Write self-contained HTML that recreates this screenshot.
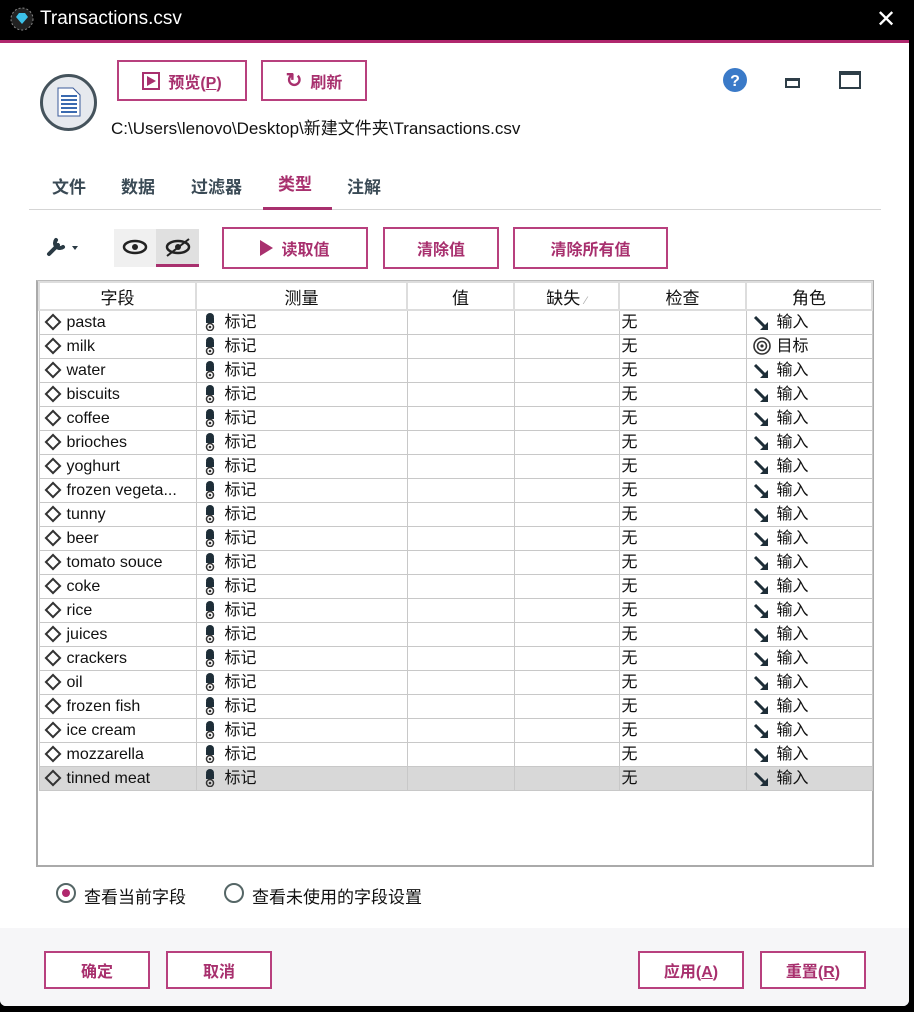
<!DOCTYPE html>
<html><head><meta charset="utf-8"><style>
*{box-sizing:border-box;margin:0;padding:0}
body{width:914px;height:1012px;background:#000;font-family:"Liberation Sans","Noto Sans CJK SC",sans-serif;position:relative;overflow:hidden}
.win{position:absolute;left:0;top:40px;width:909px;height:966px;background:#fff;border-top:3px solid #b0286e;border-radius:0 0 6px 6px;overflow:hidden}
.abs{position:absolute}
.btn{position:absolute;border:2px solid #b8407e;background:#fff;color:#a8306e;font-weight:bold;font-size:16px;display:flex;align-items:center;justify-content:center;gap:8px}
.u{text-decoration:underline}
.tab{position:absolute;top:173px;font-size:17px;color:#3a4a55;font-weight:bold}
table{border-collapse:collapse;position:absolute;left:38px;top:281px;table-layout:fixed}
tr.r{height:24px}
td{border:1px solid #c8c8c8;font-size:16px;white-space:nowrap;overflow:hidden;padding:2px 2px 0;color:#111;line-height:20px}
th{border:2px solid #ddd;height:28px;text-align:center;font-size:17px;font-weight:normal;color:#111}
.dia{display:inline-block;width:12px;height:12px;border:2px solid #333;transform:rotate(45deg);margin:0 8px 0 5px;vertical-align:-1px}
.ms{display:inline-block;vertical-align:-4px;margin:0 10px 0 6px}
.sel td{background:#d8d8d8}
</style></head><body>
<svg class="abs" style="left:10px;top:7px" width="24" height="24"><circle cx="12" cy="12" r="11" fill="#222" stroke="#888" stroke-dasharray="2 2"/><path d="M6 10l3-4h6l3 4-6 7z" fill="#3cc0e8"/></svg>
<div class="abs" style="left:40px;top:8px;color:#fff;font-size:19px">Transactions.csv</div>
<div class="abs" style="left:876px;top:5px;color:#fff;font-size:24px">✕</div>
<div class="win"></div>
<div class="abs" style="left:40px;top:74px;width:57px;height:57px;border:3px solid #45535c;border-radius:50%;background:#e6e9ee"></div>
<svg class="abs" style="left:57px;top:87px" width="24" height="30"><path d="M1 1h15l7 7v21H1z" fill="#fff" stroke="#3a5a9a"/><path d="M4 9h16M4 13h16M4 17h16M4 21h16M4 25h16" stroke="#3a6ab0" stroke-width="2"/></svg>
<div class="btn" style="left:117px;top:60px;width:130px;height:41px"><span style="display:inline-block;width:18px;height:18px;border:2px solid #a8306e;position:relative"><span style="position:absolute;left:3px;top:2px;border-left:9px solid #a8306e;border-top:5px solid transparent;border-bottom:5px solid transparent"></span></span><span>预览(<span class="u">P</span>)</span></div>
<div class="btn" style="left:261px;top:60px;width:106px;height:41px"><span style="font-size:20px">↻</span>刷新</div>
<svg class="abs" style="left:723px;top:68px" width="24" height="24"><circle cx="12" cy="12" r="12" fill="#3a7ac8"/><text x="12" y="18" font-size="16" font-weight="bold" fill="#fff" text-anchor="middle" font-family="Liberation Sans">?</text></svg>
<div class="abs" style="left:785px;top:78px;width:15px;height:10px;border:2px solid #2e3e48;border-top-width:3px"></div>
<div class="abs" style="left:839px;top:71px;width:22px;height:18px;border:2px solid #2e3e48;border-top-width:4px"></div>
<div class="abs" style="left:111px;top:114px;font-size:17px;color:#111">C:\Users\lenovo\Desktop\新建文件夹\Transactions.csv</div>
<div class="tab" style="left:52px">文件</div>
<div class="tab" style="left:121px">数据</div>
<div class="tab" style="left:191px">过滤器</div>
<div class="tab" style="left:278px;top:170px;color:#a8306e">类型</div>
<div class="tab" style="left:347px">注解</div>
<div class="abs" style="left:29px;top:209px;width:852px;height:1px;background:#d5d5d5"></div>
<div class="abs" style="left:263px;top:207px;width:69px;height:3px;background:#a8306e"></div>
<svg class="abs" style="left:46px;top:236px" width="36" height="22"><path d="M3 18l9-9M10 4a5 5 0 0 0 7 7" stroke="#2a3a44" stroke-width="4" fill="none" stroke-linecap="round"/><path d="M26 10h6l-3 4z" fill="#2a3a44"/></svg>
<div class="abs" style="left:114px;top:229px;width:85px;height:38px;background:#f0f0f0"></div>
<div class="abs" style="left:156px;top:229px;width:43px;height:38px;background:#e0e0e0;border-bottom:3px solid #a8306e"></div>
<svg class="abs" style="left:122px;top:237px" width="70" height="20"><ellipse cx="13" cy="10" rx="11" ry="6" fill="none" stroke="#222" stroke-width="2.5"/><circle cx="13" cy="10" r="3" fill="#222"/><ellipse cx="56" cy="10" rx="11" ry="6" fill="none" stroke="#222" stroke-width="2.5"/><circle cx="56" cy="10" r="3" fill="#222"/><path d="M45 19L67 2" stroke="#222" stroke-width="2"/></svg>
<div class="btn" style="left:222px;top:227px;width:146px;height:42px"><span style="border-left:13px solid #a8306e;border-top:8px solid transparent;border-bottom:8px solid transparent"></span>读取值</div>
<div class="btn" style="left:383px;top:227px;width:116px;height:42px">清除值</div>
<div class="btn" style="left:513px;top:227px;width:155px;height:42px">清除所有值</div>
<div class="abs" style="left:36px;top:280px;width:838px;height:587px;border:2px solid #aaa;border-top-color:#bbb;background:#fff"></div>
<table>
<colgroup><col style="width:157px"><col style="width:211px"><col style="width:107px"><col style="width:105px"><col style="width:127px"><col style="width:126px"></colgroup>
<tr><th>字段</th><th>测量</th><th>值</th><th>缺失 <span style="color:#aaa;font-size:11px">⁄</span></th><th>检查</th><th>角色</th></tr>
</table>
<script>
var n=["pasta","milk","water","biscuits","coffee","brioches","yoghurt","frozen vegeta...","tunny","beer","tomato souce","coke","rice","juices","crackers","oil","frozen fish","ice cream","mozzarella","tinned meat"];
var t=document.querySelector("table");
var ms='<svg class="ms" width="10" height="18"><circle cx="5" cy="4" r="4" fill="#1e2e38"/><rect x="1" y="5" width="8" height="5" fill="#1e2e38"/><circle cx="5" cy="14" r="3.5" fill="none" stroke="#333" stroke-width="1.5"/><circle cx="5" cy="14" r="1.3" fill="#333"/></svg>';
var inp='<svg class="ms" style="margin:0 8px 0 4px" width="16" height="16"><path d="M2 2L12 12" stroke="#1e2e38" stroke-width="3"/><path d="M15 7L15 15L7 15Z" fill="#1e2e38"/></svg>';
var tgt='<svg class="ms" style="margin:0 6px 0 4px" width="18" height="18"><circle cx="9" cy="9" r="8" fill="none" stroke="#333" stroke-width="1.6"/><circle cx="9" cy="9" r="4.5" fill="none" stroke="#333" stroke-width="1.6"/><circle cx="9" cy="9" r="1.6" fill="#333"/></svg>';
n.forEach(function(x,i){var r=t.insertRow();r.className="r"+(i==19?" sel":"");
r.innerHTML='<td><span class="dia"></span>'+x+'</td><td>'+ms+'标记</td><td></td><td></td><td>无</td><td>'+(i==1?tgt+'目标':inp+'输入')+'</td>';});
</script>
<div class="abs" style="left:56px;top:883px;width:20px;height:20px;border:2px solid #566;border-radius:50%"><div style="margin:4px;width:8px;height:8px;border-radius:50%;background:#b0286e"></div></div>
<div class="abs" style="left:84px;top:883px;font-size:17px;color:#111">查看当前字段</div>
<div class="abs" style="left:224px;top:883px;width:20px;height:20px;border:2px solid #566;border-radius:50%"></div>
<div class="abs" style="left:252px;top:883px;font-size:17px;color:#111">查看未使用的字段设置</div>
<div class="abs" style="left:0;top:928px;width:909px;height:78px;background:#f6f6f8;border-radius:0 0 6px 6px"></div>
<div class="btn" style="left:44px;top:951px;width:106px;height:38px">确定</div>
<div class="btn" style="left:166px;top:951px;width:106px;height:38px">取消</div>
<div class="btn" style="left:638px;top:951px;width:106px;height:38px"><span>应用(<span class="u">A</span>)</span></div>
<div class="btn" style="left:760px;top:951px;width:106px;height:38px"><span>重置(<span class="u">R</span>)</span></div>
</body></html>
